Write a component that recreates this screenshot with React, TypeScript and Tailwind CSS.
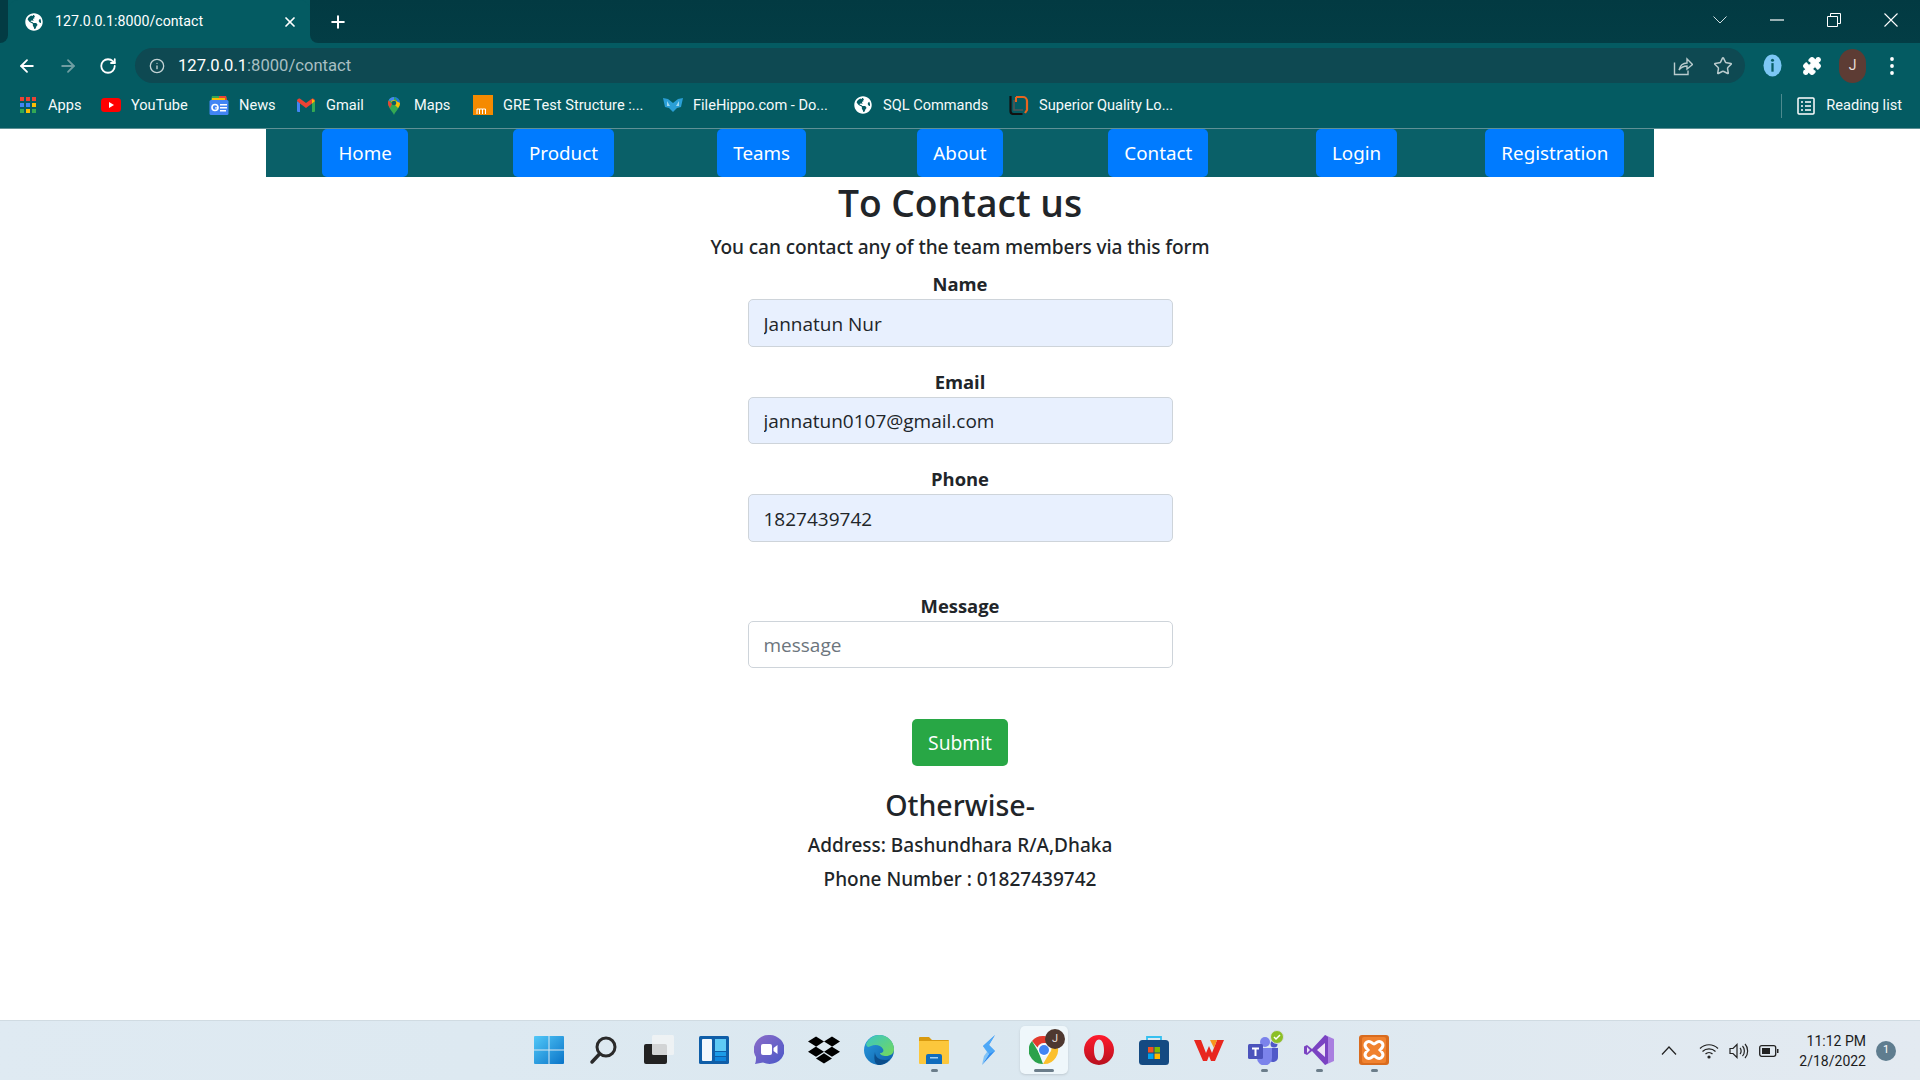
import React from "react";
import { ArrowLeft, ArrowRight, RotateCw, Info, Star, Plus, X, Puzzle } from "lucide-react";
import { FaGlobeAmericas, FaDropbox } from "react-icons/fa";

const Globe = ({ s = 18 }: { s?: number }) => <FaGlobeAmericas size={s} color="#fff" />;

const AppsIcon = () => {
  const c = ["#ea4335", "#ea4335", "#ea4335", "#4285f4", "#4285f4", "#fbbc04", "#34a853", "#fbbc04", "#34a853"];
  return (
    <div className="grid grid-cols-3 gap-[2px] w-[16px] h-[16px] mx-[2px]">
      {c.map((x, i) => (
        <svg key={i} viewBox="0 0 4 4" className="w-[4px] h-[4px]"><rect width="4" height="4" fill={x} /></svg>
      ))}
    </div>
  );
};
const YouTubeIcon = () => (
  <svg viewBox="0 0 20 20" width="20" height="20"><rect x="0" y="3" width="20" height="14" rx="3.5" fill="#f00" /><path d="M8 7l5 3-5 3z" fill="#fff" /></svg>
);
const NewsIcon = () => (
  <svg viewBox="0 0 20 20" width="20" height="20">
    <path d="M3 1h14l1 4H2z" fill="#34a853" /><path d="M10 1h7l1 4h-8z" fill="#ea4335" /><path d="M3 3h13v3H3z" fill="#fbbc04" />
    <rect x="0.5" y="5" width="19" height="15" rx="1.5" fill="#4285f4" />
    <path d="M11 9h7v1.6h-7zM11 12h7v1.6h-7zM11 15h6v1.6h-6z" fill="#fff" />
    <circle cx="6" cy="12.5" r="3" fill="none" stroke="#fff" strokeWidth="1.6" /><path d="M6 12.3h3.2v1.2H6z" fill="#fff" />
  </svg>
);
const GmailIcon = () => (
  <svg viewBox="0 0 20 20" width="20" height="20">
    <path d="M1 17V6l3 2v9H2a1 1 0 0 1-1-1z" fill="#4285f4" /><path d="M19 17V6l-3 2v9h2a1 1 0 0 0 1-1z" fill="#34a853" />
    <path d="M1 6c0-2 2-3 3.500-2L10 8l5.500-4C17 3 19 4 19 6l-3 2.500-6 4.500-6-4.500z" fill="#ea4335" />
    <path d="M16 4l3 2-3 2.500z" fill="#fbbc04" />
  </svg>
);
const MapsIcon = () => (
  <svg viewBox="0 0 20 20" width="20" height="20">
    <path d="M10 20c-1-3-6-7-6-12a6 6 0 0 1 12 0c0 5-5 9-6 12z" fill="#34a853" />
    <path d="M4.500 5.500A6 6 0 0 1 10 2v4z" fill="#4285f4" /><path d="M10 2a6 6 0 0 1 6 6l-3 1V5z" fill="#1a73e8" />
    <path d="M16 8c0 2-1 4-2 5L7 6l3-1z" fill="#fbbc04" /><path d="M4 8c0-1 .2-2 .5-2.500L8 9l-2 4c-1-1.500-2-3-2-5z" fill="#ea4335" />
    <circle cx="10" cy="8" r="2.300" fill="#0a5f66" />
  </svg>
);
const GreIcon = () => (
  <svg viewBox="0 0 20 20" width="20" height="20">
    <rect width="20" height="20" fill="#f58a00" />
    <path d="M4 19v-5h2.500v5M6.500 14h3v5M9.500 14H12.500V19" fill="none" stroke="#fff" strokeWidth="1" />
  </svg>
);
const HippoIcon = () => (
  <svg viewBox="0 0 20 20" width="20" height="20">
    <path d="M0 3l5 1 5 4 5-4 5-1-2 9-4 1-4 4-4-4-4-1z" fill="#2a9fd6" />
    <path d="M4 6l3 5-3 0zM16 6l-3 5 3 0z" fill="#9fd8ef" />
  </svg>
);
const SuperiorIcon = () => (
  <svg viewBox="0 0 20 20" width="20" height="20">
    <path d="M1.500 1v15a3 3 0 0 0 3 3h9" fill="none" stroke="#111" strokeWidth="2.200" />
    <path d="M7 2h7a4 4 0 0 1 4 4v9l-2 3" fill="none" stroke="#e8651f" strokeWidth="2.200" />
    <path d="M7 2v5" stroke="#e8651f" strokeWidth="2" />
    <path d="M5 5v10h9" fill="none" stroke="#555" strokeWidth="1.500" />
  </svg>
);

const bookmarks: [React.ReactNode, string, string][] = [
  [<AppsIcon />, "Apps", "w-[33px]"],
  [<YouTubeIcon />, "YouTube", "w-[58px]"],
  [<NewsIcon />, "News", "w-[37px]"],
  [<GmailIcon />, "Gmail", "w-[38px]"],
  [<MapsIcon />, "Maps", "w-[39px]"],
  [<GreIcon />, "GRE Test Structure :...", "w-[140px]"],
  [<HippoIcon />, "FileHippo.com - Do...", "w-[140px]"],
  [<Globe s={18} />, "SQL Commands", "w-[106px]"],
  [<SuperiorIcon />, "Superior Quality Lo...", "w-[139px]"],
];

function BrowserChrome() {
  return (
    <header className="bg-[#045b62] text-white [font-family:Roboto,'Liberation_Sans',sans-serif]">
      <div className="flex h-[43px]">
        <div className="w-[8px] bg-[#033b43] rounded-br-[8px]" />
        <div className="w-[302px] rounded-t-[10px] flex items-center pl-[17px] pr-[12px] bg-[#045b62]">
          <Globe s={18} />
          <span className="ml-[12px] text-[14.2px] flex-1 whitespace-nowrap">127.0.0.1:8000/contact</span>
          <X size={16} strokeWidth={2.6} />
        </div>
        <div className="flex-1 bg-gradient-to-b from-[#023a42] to-[#033d45] rounded-bl-[8px] flex items-center">
          <Plus size={20} strokeWidth={2.4} className="ml-[18px]" />
          <div className="flex-1" />
          <div className="flex items-center gap-[43px] pr-[22px] -mt-[3px]">
            <svg viewBox="0 0 14 8" width="14" height="8"><path d="M.5.500L7 7 13.500.500" fill="none" stroke="#cfe0e2" strokeWidth="1" /></svg>
            <svg viewBox="0 0 14 2" width="14" height="2"><path d="M0 1h14" stroke="#fff" strokeWidth="1.200" /></svg>
            <svg viewBox="0 0 14 14" width="14" height="14"><path d="M.5 3.500h10v10H.5zM3.500 3.500v-3h10v10h-3" fill="none" stroke="#fff" strokeWidth="1" /></svg>
            <svg viewBox="0 0 14 14" width="14" height="14"><path d="M.5.500l13 13M13.500.500l-13 13" fill="none" stroke="#fff" strokeWidth="1.100" /></svg>
          </div>
        </div>
      </div>
      <div className="flex items-center h-[40px] pt-[5px]">
        <div className="flex items-center w-[135px] pl-[17px] gap-[21px]">
          <ArrowLeft size={20} strokeWidth={2.2} />
          <ArrowRight size={20} strokeWidth={2.2} className="text-[#6f9ea2]" />
          <RotateCw size={18} strokeWidth={2.4} />
        </div>
        <div className="w-[1610px] h-[35px] rounded-full bg-[#0e4952] flex items-center pl-[14px] pr-[12px]">
          <Info size={16} strokeWidth={2} className="text-[#c4d3d5]" />
          <span className="ml-[13px] pt-[2px] text-[16.6px] flex-1"><span className="text-white">127.0.0.1</span><span className="text-[#a8bfc2]">:8000/contact</span></span>
          <svg viewBox="0 0 20 20" width="20" height="20" className="mr-[20px]" fill="none" stroke="#b9cbcd" strokeWidth="1.400">
            <path d="M1.500 6.500V18.500h13.500v-4" /><path d="M6 14c1-4 4-7 8-7V3l5.500 5.500L14 13V10c-3 0-6 1.500-8 4z" />
          </svg>
          <Star size={20} strokeWidth={1.8} className="text-[#b9cbcd]" />
        </div>
        <div className="flex-1 flex items-center pl-[18px] gap-[20px]">
          <svg viewBox="0 0 20 24" width="19" height="23"><ellipse cx="10" cy="12" rx="9.500" ry="11.500" fill="#7cc7f5" /><circle cx="10" cy="6.500" r="1.600" fill="#0a5f66" /><rect x="8.800" y="9.500" width="2.400" height="9" fill="#0a5f66" /></svg>
          <Puzzle size={20} color="#fff" fill="#fff" strokeWidth={1.5} />
          <div className="w-[27px] h-[34px] rounded-full bg-[#5d3c34] flex items-center justify-center text-[14px] text-[#e6dcd8] -ml-[3px]">J</div>
          <svg viewBox="0 0 4 20" width="4" height="20" className="ml-[4px]"><circle cx="2" cy="3" r="1.900" fill="#fff" /><circle cx="2" cy="10" r="1.900" fill="#fff" /><circle cx="2" cy="17" r="1.900" fill="#fff" /></svg>
        </div>
      </div>
      <div className="flex items-center h-[46px] pl-[18px] pr-[18px] border-b border-[#5f9095] text-[14.6px] text-[#f5fafa]">
        {bookmarks.map(([ic, t, w]) => (
          <div key={t} className="flex items-center gap-[10px] mr-[20px]">
            <span className="w-[20px] h-[20px] flex items-center justify-center">{ic}</span>
            <span className={`${w} whitespace-nowrap`}>{t}</span>
          </div>
        ))}
        <div className="flex-1" />
        <div className="w-px h-[24px] bg-[#4d8a8f] mr-[15px]" />
        <svg viewBox="0 0 18 18" width="18" height="18" className="mr-[11px]" fill="none" stroke="#fff" strokeWidth="1.500">
          <rect x="1" y="1" width="16" height="16" rx="1" /><path d="M4 5h2M8 5h6M4 9h2M8 9h6M4 13h2M8 13h6" />
        </svg>
        <span>Reading list</span>
      </div>
    </header>
  );
}

const navItems = ["Home", "Product", "Teams", "About", "Contact", "Login", "Registration"];

function Nav() {
  return (
    <nav className="w-[1388px] mx-auto h-[48px] bg-[#0a6068] grid grid-cols-7">
      {navItems.map((n) => (
        <div key={n} className="flex justify-center">
          <a className="h-[48px] px-[16px] flex items-center rounded-[5px] bg-[#007bff] text-white text-[18.8px]">{n}</a>
        </div>
      ))}
    </nav>
  );
}

function Field({ label, value, placeholder, className }: { label: string; value?: string; placeholder?: string; className?: string }) {
  return (
    <div className={`w-[425px] flex flex-col items-center ${className ?? ""}`}>
      <label className="h-[30px] leading-[30px] font-bold text-[18.4px]">{label}</label>
      <input
        readOnly
        value={value}
        placeholder={placeholder}
        className={`w-full h-[47.5px] border border-[#ced4da] rounded-[5px] px-[15px] pt-[2px] text-[19px] text-[#212529] placeholder:text-[#6c757d] outline-none ${value ? "bg-[#e8f0fe]" : "bg-white"}`}
      />
    </div>
  );
}

function Content() {
  return (
    <main className="flex-1 flex flex-col items-center text-[#212529] [font-family:'Open_Sans','Noto_Sans',sans-serif]">
      <h1 className="h-[50px] leading-[51px] text-[37.2px] font-semibold">To Contact us</h1>
      <p className="mt-[5px] h-[30px] leading-[31px] text-[19.1px] [font-family:'Noto_Sans',sans-serif] font-medium tracking-[-0.1px]">You can contact any of the team members via this form</p>
      <Field className="mt-[7px]" label="Name" value="Jannatun Nur" />
      <Field className="mt-[20px]" label="Email" value="jannatun0107@gmail.com" />
      <Field className="mt-[20px]" label="Phone" value="1827439742" />
      <Field className="mt-[49px]" label="Message" placeholder="message" />
      <button className="mt-[51px] pt-[2px] h-[47px] w-[96px] rounded-[5px] bg-[#28a745] text-white text-[19.3px]">Submit</button>
      <h2 className="mt-[18px] h-[40px] leading-[42px] text-[28.5px] [font-family:'Noto_Sans',sans-serif] font-medium">Otherwise-</h2>
      <p className="mt-[5px] h-[30px] leading-[32px] text-[19px] [font-family:'Noto_Sans',sans-serif] font-medium">Address: Bashundhara R/A,Dhaka</p>
      <p className="mt-[4px] h-[30px] leading-[32px] text-[19px] [font-family:'Noto_Sans',sans-serif] font-medium">Phone Number : 01827439742</p>
    </main>
  );
}

const Win = () => (
  <svg viewBox="0 0 30 30" width="30" height="30">
    <defs><linearGradient id="w1" x1="0" y1="0" x2="1" y2="1"><stop offset="0" stopColor="#52c8f8" /><stop offset="1" stopColor="#0a74c8" /></linearGradient></defs>
    <path d="M1 1h13.500v13.500H0V2a1 1 0 0 1 1-1zM15.500 1H29a1 1 0 0 1 1 1v12.500H15.500zM0 15.500h14.500V29H1a1 1 0 0 1-1-1zM15.500 15.500H30V28a1 1 0 0 1-1 1H15.500z" fill="url(#w1)" />
  </svg>
);
const Search = () => (
  <svg viewBox="0 0 30 30" width="30" height="30" fill="none" stroke="#2a2a2a"><circle cx="17" cy="12" r="9" strokeWidth="3" /><path d="M10.500 19L3 27" strokeWidth="3.500" strokeLinecap="round" /></svg>
);
const TaskView = () => (
  <svg viewBox="0 0 30 30" width="30" height="30">
    <rect x="0" y="9" width="23" height="20" rx="2" fill="#222" />
    <rect x="8" y="0" width="22" height="20" rx="1.500" fill="#f1f3f5" fillOpacity=".85" />
  </svg>
);
const Widgets = () => (
  <svg viewBox="0 0 30 30" width="30" height="30">
    <rect width="30" height="28" y="1" rx="1.500" fill="#0f5ea8" />
    <rect x="3" y="4" width="10" height="22" rx="1" fill="#f3f8fc" />
    <rect x="16" y="4" width="11" height="12" fill="#5fcaf5" /><rect x="16" y="17" width="11" height="4" fill="#1c9ce8" /><rect x="16" y="22" width="11" height="4" fill="#0f86dc" />
  </svg>
);
const Chat = () => (
  <svg viewBox="0 0 30 30" width="30" height="30">
    <defs><linearGradient id="c1" x1="0" y1="0" x2="1" y2="1"><stop offset="0" stopColor="#8c6cc8" /><stop offset="1" stopColor="#4a58c8" /></linearGradient></defs>
    <path d="M15 0a15 14.500 0 1 1-6 27.500L1 29c1-2 1-5 1-7A15 14.500 0 0 1 15 0z" fill="url(#c1)" />
    <rect x="7" y="9" width="11" height="11" rx="2" fill="#fff" /><path d="M19.500 13l4-3v9l-4-3z" fill="#fff" />
  </svg>
);
const Edge = () => (
  <svg viewBox="0 0 30 30" width="30" height="30">
    <defs>
      <linearGradient id="e1" x1="0" y1="0" x2="1" y2="1"><stop offset="0" stopColor="#3bc6c4" /><stop offset="1" stopColor="#74d95a" /></linearGradient>
      <linearGradient id="e2" x1="0" y1="0" x2="1" y2="1"><stop offset="0" stopColor="#2a9be0" /><stop offset="1" stopColor="#0c5fa8" /></linearGradient>
    </defs>
    <circle cx="15" cy="15" r="15" fill="url(#e2)" />
    <path d="M2 9C5 3 10 0 15 0c8 0 15 6 15 14 0 5-4 7-8 7-3 0-6-1-6-3 3 0 4-2 3-4-2-4-8-5-12-3-2 1-4 2-5-2z" fill="url(#e1)" />
    <path d="M11 17c0 5 4 8 10 8 2 0 4-.5 5-1.500C23 28 19 30 15 30 12 30 9 26 11 17z" fill="#0b4e8c" />
  </svg>
);
const Folder = () => (
  <svg viewBox="0 0 30 30" width="30" height="30">
    <path d="M0 3a1 1 0 0 1 1-1h9l3 3h16a1 1 0 0 1 1 1v3H0z" fill="#d99a0f" />
    <path d="M0 6h30v22a1 1 0 0 1-1 1H1a1 1 0 0 1-1-1z" fill="#fcc73c" />
    <path d="M7 29v-8a2 2 0 0 1 2-2h12a2 2 0 0 1 2 2v8z" fill="#0f6cbd" /><rect x="11" y="22" width="8" height="1.500" fill="#9fd0f5" />
  </svg>
);
const Sparkle = () => (
  <svg viewBox="0 0 30 30" width="30" height="30">
    <path d="M21 0L9 11l6 8-7 11 13-14-6-6z" fill="#2f8cf0" /><path d="M21 0l-6 10 6 6-6 3-7 11 2-9 3-4-4-6z" fill="#5ab4fa" fillOpacity=".7" />
  </svg>
);
const Chrome = () => (
  <svg viewBox="0 0 30 30" width="30" height="30">
    <path d="M15 1a14 14 0 0 1 12.100 7H15a7 7 0 0 0-6.500 4.500L3 6A14 14 0 0 1 15 1z" fill="#e33b2e" />
    <path d="M3 6l6.500 11L14 29A14 14 0 0 1 3 6z" fill="#2ba24c" />
    <path d="M27.100 8A14 14 0 0 1 14 29l6.500-11a7 7 0 0 0 0-10z" fill="#fbc02d" />
    <circle cx="15" cy="15" r="6" fill="#fff" /><circle cx="15" cy="15" r="5" fill="#4285f4" />
  </svg>
);
const Opera = () => (
  <svg viewBox="0 0 30 30" width="30" height="30">
    <defs><linearGradient id="o1" x1="0" y1="0" x2="0" y2="1"><stop offset="0" stopColor="#ff1b2d" /><stop offset="1" stopColor="#b8101e" /></linearGradient></defs>
    <path fillRule="evenodd" d="M15 0a15 15 0 1 1 0 30 15 15 0 0 1 0-30zm0 4.500c-3 0-5 4.500-5 10.500s2 10.500 5 10.500 5-4.500 5-10.500-2-10.500-5-10.500z" fill="url(#o1)" />
  </svg>
);
const Store = () => (
  <svg viewBox="0 0 30 30" width="30" height="30">
    <path d="M8 5V2h14v3" fill="none" stroke="#35c0f0" strokeWidth="1.800" />
    <rect y="5" width="30" height="25" rx="3.500" fill="#144a82" />
    <rect x="9" y="12" width="5.500" height="5.500" fill="#f25022" /><rect x="15.500" y="12" width="5.500" height="5.500" fill="#7fba00" />
    <rect x="9" y="18.500" width="5.500" height="5.500" fill="#00a4ef" /><rect x="15.500" y="18.500" width="5.500" height="5.500" fill="#ffb900" />
  </svg>
);
const Wps = () => (
  <svg viewBox="0 0 30 30" width="30" height="30">
    <path d="M0 5h7l5 13 3-7 3 7 5-13h7L21 26h-4l-2-5-2 5H9z" fill="#e8271f" /><path d="M16 5h7l-3 8z" fill="#f7941d" />
  </svg>
);
const Teams = () => (
  <svg viewBox="0 0 32 30" width="32" height="30">
    <circle cx="17" cy="7" r="5" fill="#7b83eb" /><circle cx="26" cy="9" r="3.500" fill="#5059c9" />
    <path d="M21 13h9v9a5 5 0 0 1-9 3z" fill="#5059c9" /><path d="M9 13h15v10a7 7 0 0 1-15 0z" fill="#7b83eb" />
    <rect y="9" width="15" height="15" rx="1.500" fill="#4b53bc" /><path d="M4 12.500h7v2H8.500V21h-2v-6.500H4z" fill="#fff" />
  </svg>
);
const VS = () => (
  <svg viewBox="0 0 30 30" width="30" height="30">
    <path d="M21 0l9 4v22l-9 4z" fill="#a97fe0" /><path d="M21 0L8 14 3 10 0 11.500v7L3 20l5-4 13 14 3-2V2z" fill="#7a43c2" />
    <path d="M3 12v6l3-3zM21 8l-8 7 8 7z" fill="#fff" fillOpacity=".85" />
  </svg>
);
const Xampp = () => (
  <svg viewBox="0 0 30 30" width="30" height="30">
    <rect width="30" height="30" rx="3" fill="#d96b1e" />
    <rect x="3" y="2" width="24" height="26" rx="2" fill="#f0822f" />
    <path d="M8 7c4-2 5 2 7 2s3-4 7-2c4 3 1 6-1 8 2 2 5 5 1 8-4 2-5-2-7-2s-3 4-7 2c-4-3-1-6 1-8-2-2-5-5-1-8z" fill="none" stroke="#fff" strokeWidth="3" />
  </svg>
);

const Dot = ({ w = "w-[7px]" }: { w?: string }) => <div className={`absolute bottom-[2px] ${w} h-[3px] rounded-full bg-[#6b7d8a]`} />;

function Taskbar() {
  return (
    <footer className="h-[60px] border-t border-[#d0dbe2] bg-gradient-to-r from-[#dfeaf2] via-[#dbe8f0] to-[#e3eaf1] flex items-center [font-family:Roboto,sans-serif]">
      <div className="flex-1" />
      <div className="flex items-center ml-[3px] -mt-[1px]">
        {[<Win />, <Search />, <TaskView />, <Widgets />, <Chat />, <FaDropbox size={32} color="#000" />, <Edge />].map((ic, i) => (
          <div key={i} className="w-[55px] h-[48px] flex items-center justify-center">{ic}</div>
        ))}
        <div className="relative w-[55px] h-[48px] flex items-center justify-center"><Folder /><Dot /></div>
        <div className="w-[55px] h-[48px] flex items-center justify-center"><Sparkle /></div>
        <div className="relative w-[48px] h-[48px] mx-[3.500px] rounded-[5px] bg-[#eff7fb] shadow-sm flex items-center justify-center">
          <Chrome />
          <div className="absolute top-[3px] right-[3px] w-[20px] h-[20px] rounded-full bg-[#4e3830] text-[#e6dcd8] text-[11px] flex items-center justify-center">J</div>
          <Dot w="w-[20px]" />
        </div>
        {[<Opera />, <Store />, <Wps />].map((ic, i) => (
          <div key={i} className="w-[55px] h-[48px] flex items-center justify-center">{ic}</div>
        ))}
        <div className="relative w-[55px] h-[48px] flex items-center justify-center">
          <Teams />
          <svg viewBox="0 0 14 14" width="14" height="14" className="absolute top-[4px] right-[8px]"><circle cx="7" cy="7" r="6.500" fill="#8cbf26" stroke="#d8dde2" /><path d="M4 7l2 2 4-4" fill="none" stroke="#fff" strokeWidth="1.500" /></svg>
          <Dot />
        </div>
        <div className="relative w-[55px] h-[48px] flex items-center justify-center"><VS /><Dot /></div>
        <div className="relative w-[55px] h-[48px] flex items-center justify-center"><Xampp /><Dot /></div>
      </div>
      <div className="flex-1 flex items-center justify-end text-[#1c1c1c]">
        <svg viewBox="0 0 16 9" width="16" height="9" className="mr-[22px]"><path d="M1 8.500L8 1l7 7.500" fill="none" stroke="#222" strokeWidth="1.200" /></svg>
        <svg viewBox="0 0 20 16" width="20" height="16" className="mr-[10px]" fill="none" stroke="#222" strokeWidth="1.200">
          <path d="M1 5.500c5-5 13-5 18 0M3.500 8.500c3.500-3.500 9.500-3.500 13 0M6.500 11c2-2 5-2 7 0" /><circle cx="10" cy="14" r="1" fill="#222" />
        </svg>
        <svg viewBox="0 0 20 16" width="20" height="16" className="mr-[10px]" fill="none" stroke="#222" strokeWidth="1.200">
          <path d="M1 5.500h3l4-4v13l-4-4H1zM11 5c1.500 1.500 1.500 4.500 0 6M13.500 3c2.500 2.500 2.500 7.500 0 10M16 1c3.500 3.500 3.500 10.500 0 14" />
        </svg>
        <svg viewBox="0 0 20 12" width="20" height="12" className="mr-[20px]">
          <rect x=".7" y=".7" width="16" height="10.600" rx="2" fill="none" stroke="#222" strokeWidth="1.300" /><rect x="3" y="3" width="8" height="6" fill="#222" /><rect x="18" y="4" width="1.500" height="4" fill="#222" />
        </svg>
        <div className="text-right text-[14px] leading-[20px] mr-[10px]">
          <div>11:12 PM</div>
          <div>2/18/2022</div>
        </div>
        <div className="w-[20px] h-[20px] rounded-full bg-[#5f7d8f] text-white text-[11px] flex items-center justify-center mr-[24px]">1</div>
      </div>
    </footer>
  );
}

export default function App() {
  return (
    <div className="h-screen w-full flex flex-col bg-white overflow-hidden">
      <BrowserChrome />
      <Nav />
      <Content />
      <Taskbar />
    </div>
  );
}
